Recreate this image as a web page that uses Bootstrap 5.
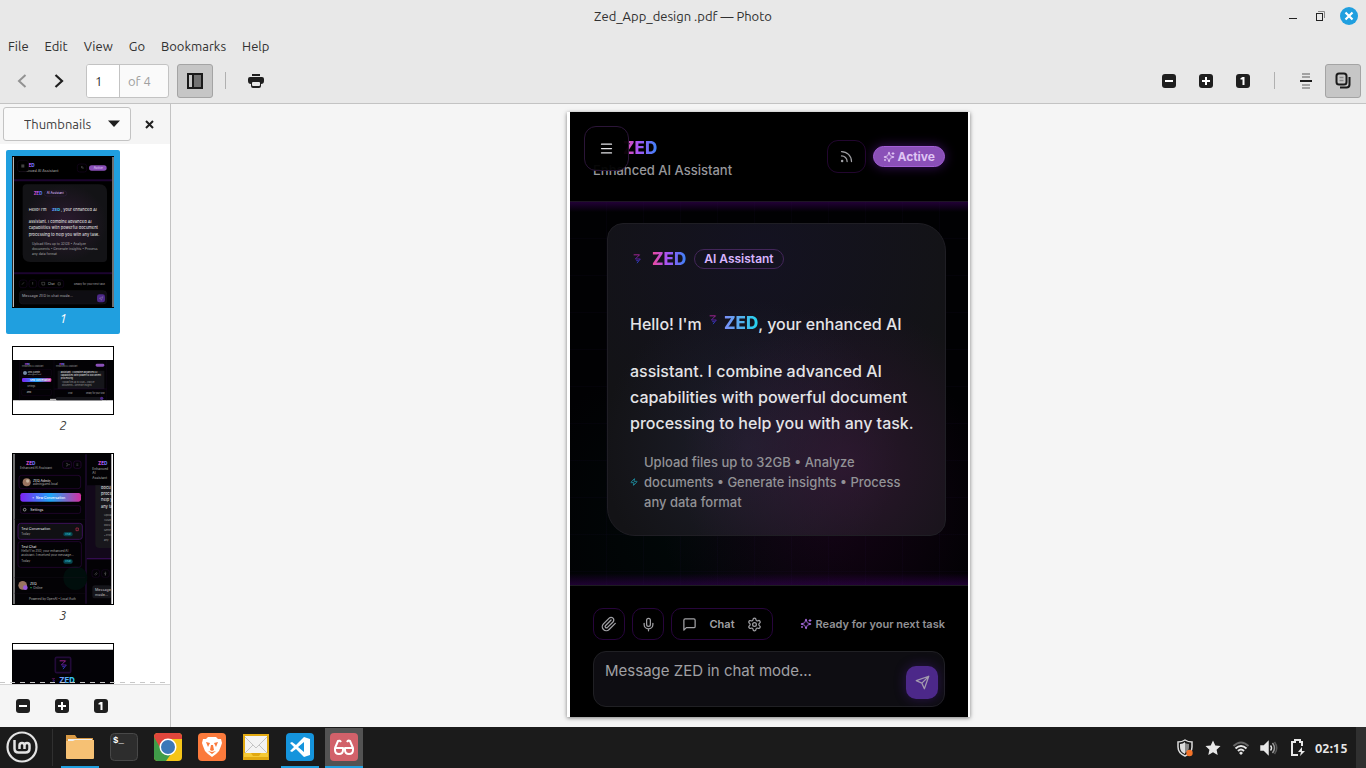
<!DOCTYPE html>
<html lang="en">
<head>
<meta charset="utf-8">
<meta name="viewport" content="width=device-width, initial-scale=1">
<title>Zed_App_design .pdf — Photo</title>
<link href="https://cdn.jsdelivr.net/npm/bootstrap@5.3.0/dist/css/bootstrap.min.css" rel="stylesheet">
<style>
  :root { --accent: #209fdf; --chrome: #e8e8e8; --edge: #c3c3c3; --ink: #303030; }
  body { font-family: Ubuntu, "Noto Sans", sans-serif; font-size: 13px; line-height: 20px; color: var(--ink); background: #f5f5f5; }
  button { font: inherit; color: inherit; padding: 0; border: 0; background: none; }
  svg { display: block; flex: none; }
  .line-art { fill: none; stroke: currentColor; stroke-width: 2; stroke-linecap: round; stroke-linejoin: round; }

  /* window frame */
  .titlebar { height: 32px; background: var(--chrome); }
  .window-buttons { gap: 15px; right: 8px; top: 7px; }
  .menubar { height: 28px; background: var(--chrome); padding: 0 8px; gap: 16px; }
  .menubar a { color: var(--ink); text-decoration: none; }
  .toolbar { height: 44px; background: var(--chrome); border-bottom: 1px solid var(--edge); padding: 0 5px 2px 4px; }
  .tool-row { gap: 1px; }
  .tool { width: 36px; height: 34px; display: flex; align-items: center; justify-content: center; border-radius: 3px; color: #1f1f1f; }
  .tool-on { background: #c6c6c6; border: 1px solid #a4a4a4; }
  .page-box { width: 83px; height: 34px; margin: 0 8px 0 9px; background: #fafafa; border: 1px solid var(--edge); border-radius: 3px; overflow: hidden; }
  .page-box input { width: 33px; border: 0; border-right: 1px solid var(--edge); padding: 0 0 0 8px; background: #fff; color: var(--ink); outline: 0; }
  .page-box label { padding-left: 8px; color: #a0a0a0; }
  .divider { width: 1px; height: 17px; background: #b0b0b0; margin: 0 12px; }

  /* thumbnails pane */
  .work { min-height: 0; }
  .side { width: 171px; flex: none; border-right: 1px solid var(--edge); background: #f5f5f5; }
  .side-head { height: 40px; padding: 3px; flex: none; }
  .picker { width: 128px; height: 34px; position: relative; }
  .picker select { appearance: none; width: 100%; height: 100%; padding: 0 0 0 20px; border: 1px solid var(--edge); border-radius: 3px; background: #fafafa; color: #404040; }
  .picker svg { position: absolute; right: 11px; top: 13px; pointer-events: none; }
  .thumbs { background: #fff; padding: 6px; overflow: hidden; min-height: 0; border-bottom: 1px solid #d4d4d4; position: relative; }
  .thumbs::after { content: ""; position: absolute; left: 0; right: 0; bottom: 1px; height: 1px; background: repeating-linear-gradient(90deg, #c8c8c8 0 5px, transparent 5px 10px); }
  .thumb { display: block; width: 114px; padding: 6px; margin-bottom: 6px; border-radius: 2px; text-align: center; font-style: italic; flex: none; color: #404040; text-decoration: none; }
  .thumb-on { background: var(--accent); color: #fff; }
  .thumb > svg { width: 102px; font-family: Inter, sans-serif; font-style: normal; font-weight: 500; }
  .side-foot { height: 42px; padding-left: 5px; gap: 3px; flex: none; }

  /* document page */
  .viewer { padding: 8px; }
  .sheet { width: 403px; padding: 0 2px 0 3px; background: #fff; box-shadow: 0 1px 4px rgba(0,0,0,.5); }
  .app { height: 605px; background: #000; color: #e4e4e7; font-family: Inter, sans-serif; font-weight: 500; }
  .app-head { height: 90px; padding: 25px 23px 0; border-bottom: 1px solid #1e1525; }
  .head-tools { gap: 7px; padding-top: 3px; }
  .brand { font-size: 17px; line-height: 22px; font-weight: 800; width: fit-content; background: linear-gradient(90deg, #ec4899, #a855f7 45%, #3b82f6); -webkit-background-clip: text; background-clip: text; color: transparent; }
  .brand-cool { background-image: linear-gradient(90deg, #7c8cf8, #55b0ee 50%, #22d3ee); }
  .brand-head { margin-left: 30px; }
  .tagline { font-size: 13px; line-height: 22px; color: #97979b; }
  .burger { position: absolute; left: 14px; top: 14px; width: 45px; height: 45px; border: 1px solid #2b1538; border-radius: 12px; background: rgba(0,0,0,.95); display: flex; align-items: center; justify-content: center; color: #e4e4e7; }
  .feed { width: 39px; height: 33px; border: 1px solid #22062f; border-radius: 11px; display: flex; align-items: center; justify-content: center; color: #a0a0a4; }
  .active-pill { height: 21px; padding: 0 9px; border: 1px solid #a35fd6; border-radius: 11px; background: #8a50b8; color: #dfc4f3; font-size: 12px; line-height: 12px; font-weight: 700; gap: 2px; box-shadow: 0 0 12px rgba(126,34,206,.45); }
  .app-body { background:
      linear-gradient(180deg, rgba(60,0,95,.55), transparent 10px),
      linear-gradient(0deg, rgba(60,0,95,.5), transparent 12px),
      repeating-linear-gradient(90deg, transparent 0 36px, rgba(60,30,120,.05) 36px 37px),
      repeating-linear-gradient(180deg, transparent 0 36px, rgba(60,30,120,.05) 36px 37px),
      radial-gradient(circle at 65% 80%, rgba(50,8,50,.4), transparent 42%),
      radial-gradient(circle at 30% 85%, rgba(0,50,40,.14), transparent 40%), #010103;
      padding: 21px 22px 0 37px; height: 383px; }
  .bubble { height: 313px; padding: 24px 22px; border: 1px solid #1f1e24; border-radius: 16px 28px 16px 28px; background:
      radial-gradient(circle at 70% 78%, rgba(62,25,62,.55), transparent 48%),
      radial-gradient(circle at 42% 72%, rgba(40,42,66,.5), transparent 50%),
      radial-gradient(circle at 45% 10%, rgba(20,18,36,.8), transparent 60%), #131316; }
  .role-pill { height: 20px; padding: 0 9px; border: 1px solid #43265a; border-radius: 10px; color: #d8b4fe; font-size: 12px; line-height: 18px; font-weight: 600; margin-left: 8px; }
  .hello { font-size: 16px; line-height: 26px; margin-top: 33px; }
  .hello-lead { height: 47px; margin-bottom: 8px; padding-top: 8px; white-space: nowrap; }
  .hello-lead .brand { line-height: 24px; }
  .hint { font-size: 13px; line-height: 20px; margin-top: 16px; color: #929296; gap: 6px; }
  .app-foot { padding: 22px 23px 0; border-top: 1px solid #1c1c20; }
  .chips { gap: 7px; }
  .chip { height: 32px; min-width: 32px; border: 1px solid #27053c; border-radius: 10px; color: #a0a0a4; display: flex; align-items: center; justify-content: center; font-size: 11px; font-weight: 600; }
  .chip-wide { width: 102px; gap: 12px; }
  .ready { font-size: 11px; font-weight: 600; color: #929296; gap: 3px; }
  .composer { height: 56px; margin-top: 11px; background: #0e0d12; border: 1px solid #202024; border-radius: 13px; padding: 7px 6px 7px 11px; }
  .composer textarea { resize: none; border: 0; padding: 0; background: transparent; color: #e4e4e7; font-size: 15px; line-height: 24px; outline: 0; min-width: 0; font-weight: 400; overflow: hidden; }
  .composer textarea::placeholder { color: #a0a0a4; opacity: 1; }
  .send { width: 32px; height: 33px; border-radius: 10px; background: #4c2889; color: #a39aaf; display: flex; align-items: center; justify-content: center; box-shadow: 0 0 12px rgba(76,29,149,.45); }

  /* panel */
  .panel { height: 41px; background: #1b1b1b; color: #e8e8e8; }
  .launch { width: 44px; height: 41px; display: flex; align-items: center; justify-content: center; padding: 0 0 1px; }
  .launch-run { background: linear-gradient(var(--accent), var(--accent)) center bottom / 38px 2px no-repeat; }
  .launch-now { background: linear-gradient(var(--accent), var(--accent)) center bottom / 38px 2px no-repeat, linear-gradient(#535353, #535353) center bottom / 38px 40px no-repeat; }
  .panel-sep { width: 1px; height: 37px; background: #303030; margin: 0 5px 0 8px; }
  .tray { gap: 8px; }
  .clock { font-weight: 600; min-width: 36px; }
  .desk { width: 10px; background: #303030; margin-left: 5px; }
</style>
</head>
<body class="d-flex flex-column vh-100 overflow-hidden">

<!-- shared symbols -->
<svg width="0" height="0" class="position-absolute" aria-hidden="true">
  <defs>
    <linearGradient id="gz" x1="0" x2="1"><stop stop-color="#ec4899"/><stop offset=".45" stop-color="#a855f7"/><stop offset="1" stop-color="#3b82f6"/></linearGradient>
    <linearGradient id="gc" x1="0" x2="1"><stop stop-color="#7c8cf8"/><stop offset="1" stop-color="#22d3ee"/></linearGradient>
    <linearGradient id="gb" x1="0" x2="1"><stop stop-color="#7e22f5"/><stop offset=".5" stop-color="#1ea7f5"/><stop offset="1" stop-color="#d42fa0"/></linearGradient>
    <linearGradient id="gm" x1="0" x2="0" y2="1"><stop stop-color="#c026a8"/><stop offset=".5" stop-color="#5b21b6"/><stop offset="1" stop-color="#1d4ed8"/></linearGradient>
    <radialGradient id="gr"><stop stop-color="#2c1a30"/><stop offset="1" stop-color="#131316"/></radialGradient>
    <symbol id="zoom-out" viewBox="0 0 14 14"><rect width="14" height="14" rx="3" fill="#1f1f1f"/><path d="M3 6h8v2H3z" fill="#fff"/></symbol>
    <symbol id="zoom-in" viewBox="0 0 14 14"><rect width="14" height="14" rx="3" fill="#1f1f1f"/><path d="M3 6h3V3h2v3h3v2H8v3H6V8H3z" fill="#fff"/></symbol>
    <symbol id="zoom-one" viewBox="0 0 14 14"><rect width="14" height="14" rx="3" fill="#1f1f1f"/><path d="M6.500 3H8.500v8h-2V5.500H4.500V4.200z" fill="#fff"/></symbol>
    <symbol id="zmark" viewBox="0 0 10 12"><path d="M1 1h7L3 6h6L5 11M4 8h3" fill="none" stroke="url(#gm)" stroke-width="1"/></symbol>
    <symbol id="sparkles" viewBox="0 0 24 24"><path d="M9.900 15.500a2 2 0 0 0-1.400-1.400l-6.100-1.600a.5.5 0 0 1 0-1l6.100-1.500a2 2 0 0 0 1.400-1.500l1.600-6.100a.5.5 0 0 1 1 0l1.500 6.100a2 2 0 0 0 1.500 1.500l6.100 1.500a.5.5 0 0 1 0 1l-6.100 1.600a2 2 0 0 0-1.500 1.400l-1.500 6.100a.5.5 0 0 1-1 0zM20 3v4M22 5h-4M4 17v2M5 18H3"/></symbol>
  </defs>
</svg>

<header>
  <div class="titlebar position-relative d-flex align-items-center justify-content-center">
    <span>Zed_App_design .pdf — Photo</span>
    <div class="window-buttons position-absolute d-flex align-items-center">
      <button aria-label="Minimize"><svg width="10" height="12"><path d="M1 8.500h8" stroke="#222" stroke-width="1"/></svg></button>
      <button aria-label="Restore"><svg width="12" height="12"><path d="M5 1.500h6.500V8" fill="none" stroke="#888"/><rect x="3.500" y="3.500" width="6" height="7" fill="none" stroke="#222"/></svg></button>
      <button aria-label="Close"><svg width="18" height="18"><circle cx="9" cy="9" r="9" fill="#209fdf"/><path d="M5.500 5.500l7 7m0-7l-7 7" stroke="#fff" stroke-width="2.200"/></svg></button>
    </div>
  </div>
  <nav class="menubar d-flex align-items-center">
    <a href="#">File</a><a href="#">Edit</a><a href="#">View</a><a href="#">Go</a><a href="#">Bookmarks</a><a href="#">Help</a>
  </nav>
  <div class="toolbar d-flex align-items-center">
    <div class="tool-row d-flex">
      <button class="tool" aria-label="Previous page"><svg width="10" height="14"><path d="M8.500 1L2 7l6.500 6" fill="none" stroke="#929292" stroke-width="2"/></svg></button>
      <button class="tool" aria-label="Next page"><svg width="10" height="14"><path d="M1.500 1L8 7l-6.500 6" fill="none" stroke="#1f1f1f" stroke-width="2.200"/></svg></button>
    </div>
    <div class="page-box d-flex align-items-stretch">
      <input id="page" type="text" value="1"><label for="page" class="align-self-center">of 4</label>
    </div>
    <button class="tool tool-on" aria-label="Side pane"><svg width="16" height="16"><path d="M1 1h14v14H1z" fill="#c6c6c6"/><path d="M6 1h9v14H6z" fill="#727272"/><path d="M1 1h14v14H1zM6 1v14" fill="none" stroke="#1a1a1a" stroke-width="2"/></svg></button>
    <span class="divider"></span>
    <button class="tool" aria-label="Print"><svg width="16" height="16" viewBox="0 0 16 16"><path d="M4 1h8v2H4zM2 4h12a2 2 0 0 1 2 2v2q0 3-3 3v2q0 2-2 2H5q-2 0-2-2v-2q-3 0-3-3V6a2 2 0 0 1 2-2z" fill="#1f1f1f"/><rect x="4" y="9" width="8" height="4" rx="1" fill="#e8e8e8"/></svg></button>
    <div class="tool-row d-flex align-items-center ms-auto">
      <button class="tool" aria-label="Zoom out"><svg width="14" height="14"><use href="#zoom-out"/></svg></button>
      <button class="tool" aria-label="Zoom in"><svg width="14" height="14"><use href="#zoom-in"/></svg></button>
      <button class="tool" aria-label="Normal size"><svg width="14" height="14"><use href="#zoom-one"/></svg></button>
      <span class="divider"></span>
      <button class="tool" aria-label="Continuous"><svg width="12" height="16"><path d="M2 1h8M2 4h8M2 12h8M2 15h8" stroke="#a2a2a2" stroke-width="2"/><path d="M0 8h12" stroke="#1a1a1a" stroke-width="2"/></svg></button>
      <button class="tool tool-on" aria-label="Dual page"><svg width="16" height="17" viewBox="0 0 16 17" fill="none"><rect x="1.500" y="1.500" width="10" height="11" rx="2.500" stroke="#1a1a1a" stroke-width="2"/><path d="M14.500 5v7.500q0 3-3 3H5" stroke="#1a1a1a" stroke-width="2"/><path d="M4.500 5.500h4M4.500 8.500h4" stroke="#8a8a8a" stroke-width="1.500"/></svg></button>
    </div>
  </div>
</header>

<main class="work d-flex flex-grow-1">
  <aside class="side d-flex flex-column">
    <div class="side-head d-flex align-items-center">
      <div class="picker">
        <select aria-label="Side pane content"><option>Thumbnails</option></select>
        <svg width="12" height="7"><path d="M0 .5h12L6 7z" fill="#1f1f1f"/></svg>
      </div>
      <button class="tool" aria-label="Close pane"><svg width="9" height="9"><path d="M1 1l7 7m0-7L1 8" stroke="#1f1f1f" stroke-width="2"/></svg></button>
    </div>
    <div class="thumbs flex-grow-1 d-flex flex-column">
      <a href="#" class="thumb thumb-on">
        <svg height="152" viewBox="0 0 306 456" role="img" aria-label="Page 1">
          <rect width="306" height="456" fill="#000"/><path d="M4 3v450M303 3v450" stroke="#ddd" stroke-width="3"/>
          <path d="M6 73h294" stroke="#1c0430" stroke-width="6"/><path d="M6 352h294" stroke="#1c0430" stroke-width="6"/>
          <text x="40" y="34" font-size="14" font-weight="800" fill="url(#gz)">ZED</text>
          <text x="22" y="49" font-size="11" fill="#999">Enhanced AI Assistant</text>
          <rect x="16" y="13" width="34" height="34" rx="9" fill="#000" stroke="#251030"/><path d="M28 27h9M28 30h9M28 33h9" stroke="#ddd"/>
          <rect x="196" y="24" width="28" height="24" rx="7" fill="none" stroke="#2c083d"/><path d="M207 31q7 0 7 7m-7-4q4 0 4 4" fill="none" stroke="#999"/>
          <rect x="231" y="28" width="53" height="16" rx="8" fill="#8a50b8"/><text x="245" y="39" font-size="9" fill="#dfc4f3">Active</text>
          <path d="M44 85h217q24 0 24 24v197q0 12-12 12H56q-24 0-24-24V97q0-12 12-12z" fill="url(#gr)"/>
          <text x="65" y="116" font-size="13" font-weight="800" fill="url(#gz)">ZED</text><rect x="97" y="105" width="67" height="15" rx="7" fill="none" stroke="#43265a"/><text x="104" y="115" font-size="9" fill="#d8b4fe">AI Assistant</text>
          <g font-size="12" fill="#ddd"><text x="50" y="165">Hello! I'm</text><text x="120" y="164" font-weight="800" fill="url(#gc)">ZED</text><text x="147" y="165">, your enhanced AI</text><text x="50" y="200">assistant. I combine advanced AI</text><text x="50" y="219">capabilities with powerful document</text><text x="50" y="239">processing to help you with any task.</text></g>
          <g font-size="10" fill="#929296"><text x="60" y="266">Upload files up to 32GB • Analyze</text><text x="60" y="281">documents • Generate insights • Process</text><text x="60" y="297">any data format</text></g>
          <path d="M6 356h294v97H6z" fill="#000"/>
          <g fill="none" stroke="#27053c"><rect x="22" y="372" width="23" height="23" rx="7"/><rect x="51" y="372" width="23" height="23" rx="7"/><rect x="80" y="372" width="75" height="23" rx="7"/></g>
          <g fill="none" stroke="#999"><path d="M30 386l6-7M62 378v8M89 379h9v8h-8zM138 380h7v7h-7z"/></g>
          <text x="108" y="387" font-size="9" fill="#999">Chat</text><text x="186" y="387" font-size="8" fill="#929296">Ready for your next task</text>
          <rect x="22" y="404" width="262" height="40" rx="10" fill="#0e0d12" stroke="#202024"/><text x="30" y="422" font-size="11" fill="#929296">Message ZED in chat mode...</text><rect x="255" y="415" width="24" height="24" rx="7" fill="#4c2889"/><path d="M262 427l11-5-5 11-2-5z" fill="none" stroke="#aaa"/>
        </svg>1</a>
      <a href="#" class="thumb">
        <svg height="69" viewBox="0 0 306 207" role="img" aria-label="Page 2">
          <rect x="1.500" y="1.500" width="303" height="204" fill="#fff" stroke="#000" stroke-width="3"/><path d="M3 42h300v121H3z" fill="#030205"/>
          <path d="M126 42v121M22 42v121M284 42v121" stroke="#1c0b28"/><path d="M114 160h78" stroke="#ddd" stroke-width="3"/>
          <text x="38" y="58" font-size="8" font-weight="800" fill="url(#gz)">ZED</text><text x="142" y="58" font-size="8" font-weight="800" fill="url(#gz)">ZED</text>
          <g font-size="6" fill="#888"><text x="30" y="64">Enhanced AI Assistant</text><text x="132" y="64">Enhanced AI Assistant</text></g>
          <rect x="251" y="53" width="26" height="9" rx="4" fill="#8a50b8"/>
          <rect x="28" y="70" width="90" height="22" rx="4" fill="none" stroke="#21082e"/><circle cx="39" cy="81" r="6" fill="#758ba5"/><text x="47" y="81" font-size="7" fill="#ccc">ZED Admin</text><text x="47" y="88" font-size="5" fill="#999">admin@zed.local</text>
          <rect x="30" y="96" width="88" height="12" rx="4" fill="url(#gb)"/><text x="54" y="105" font-size="7" fill="#fff">New Conversation</text><text x="46" y="124" font-size="6" fill="#999">Settings</text><rect x="29" y="130" width="89" height="18" rx="4" fill="none" stroke="#21082e"/><text x="44" y="141" font-size="7" fill="#ccc">ZED</text>
          <path d="M137 74h140v55H137z" fill="#15151a"/><g font-size="7" fill="#ddd"><text x="146" y="82">assistant. I combine advanced AI</text><text x="146" y="90">capabilities with powerful document</text><text x="146" y="98">processing</text></g><g font-size="6" fill="#888"><text x="150" y="112">Upload files up to 32GB • Analyze</text><text x="150" y="119">documents • Generate insights</text></g>
          <path d="M127 129h157" stroke="#350a4a"/><text x="168" y="145" font-size="6" fill="#999">Chat</text><text x="222" y="145" font-size="6" fill="#999">Ready for your task</text><rect x="132" y="153" width="140" height="10" rx="3" fill="#15151a"/><circle cx="269" cy="157" r="5" fill="#4c2889"/>
        </svg>2</a>
      <a href="#" class="thumb">
        <svg height="152" viewBox="0 0 306 456" role="img" aria-label="Page 3">
          <rect x="1.500" y="1.500" width="303" height="453" fill="#030205" stroke="#000" stroke-width="3"/><path d="M6 3v450" stroke="#ddd" stroke-width="3"/><path d="M222 4v448" stroke="#210d35" stroke-width="4"/>
          <path d="M224 97h74v220h-74z" fill="#12081a"/><path d="M250 97h48v188h-35q-13 0-13-13z" fill="#18171c"/><path d="M224 317h74" stroke="#330c50" stroke-width="4"/><circle cx="190" cy="375" r="36" fill="#000e0c"/>
          <text x="42" y="35" font-size="14" font-weight="800" fill="url(#gz)">ZED</text><text x="258" y="35" font-size="14" font-weight="800" fill="url(#gz)">ZED</text><text x="24" y="49" font-size="9" fill="#999">Enhanced AI Assistant</text>
          <g font-size="10" fill="#999"><text x="241" y="50">Enhanced</text><text x="241" y="63">AI</text><text x="241" y="77">Assistant</text></g>
          <g fill="none" stroke="#2c083d" stroke-width="2"><rect x="152" y="24" width="26" height="22" rx="6"/><rect x="185" y="24" width="22" height="22" rx="6"/><rect x="21" y="67" width="185" height="40" rx="8"/><rect x="25" y="158" width="181" height="23" rx="6"/><rect x="18" y="266" width="190" height="77" rx="8"/></g>
          <path d="M162 31h4v8h-4M168 35h6M193 33h6M193 37h6" fill="none" stroke="#999"/>
          <circle cx="44" cy="88" r="12" fill="#98745f"/><circle cx="47" cy="84" r="5" fill="#c5b29c"/><text x="63" y="86" font-size="10" fill="#ddd">ZED Admin</text><text x="63" y="97" font-size="9" fill="#999">admin@zed.local</text>
          <rect x="25" y="120" width="182" height="26" rx="7" fill="url(#gb)"/><text x="60" y="137" font-size="10" fill="#fff">+ &nbsp;New Conversation</text><circle cx="38" cy="170" r="4" fill="none" stroke="#ccc" stroke-width="2"/><text x="55" y="174" font-size="10" fill="#ddd">Settings</text>
          <path d="M6 199h214M6 374h214M6 421h214" stroke="#1a1320"/><rect x="18" y="211" width="193" height="48" rx="8" fill="#101014" stroke="#3c1159" stroke-width="3"/>
          <g font-size="10" fill="#ddd"><text x="28" y="230">Test Conversation</text><text x="28" y="284">Test Chat</text><text x="54" y="395">ZED</text></g><path d="M192 225h7v8h-7z" fill="none" stroke="#c03050" stroke-width="2"/>
          <g font-size="9" fill="#999"><text x="28" y="246">Today</text><text x="28" y="297">Hello! I'm ZED, your enhanced AI</text><text x="28" y="309">assistant. I received your message...</text><text x="28" y="328">Today</text><text x="64" y="407">Online</text><text x="51" y="441">Powered by OpenAI • Local Auth</text></g>
          <rect x="154" y="237" width="28" height="13" rx="6" fill="#064650"/><rect x="154" y="319" width="28" height="13" rx="6" fill="#064650"/><g font-size="8" fill="#39bfd0"><text x="160" y="246">chat</text><text x="160" y="328">chat</text></g>
          <circle cx="32" cy="397" r="13" fill="#98745f"/><circle cx="40" cy="404" r="7" fill="#9858d8"/><circle cx="57" cy="404" r="2" fill="#22c55e"/>
          <g font-size="12" fill="#ddd"><text x="267" y="107">docu</text><text x="267" y="126">proce</text><text x="267" y="145">help y</text><text x="267" y="164">any ta</text></g><g font-size="8" fill="#888"><text x="276" y="190">Uploa</text><text x="276" y="205">32GB</text><text x="276" y="220">docu</text><text x="276" y="235">Gene</text><text x="276" y="250">• Proc</text><text x="276" y="264">any</text></g>
          <g fill="none" stroke="#2c083d"><rect x="240" y="350" width="23" height="23" rx="7"/><rect x="269" y="350" width="23" height="23" rx="7"/></g><path d="M248 365l6-7M251 367l5-6M280 356v8M277 361q3 5 6 0M280 364v4" fill="none" stroke="#aaa"/>
          <rect x="241" y="397" width="57" height="39" rx="8" fill="#15151a"/><g font-size="11" fill="#aaa"><text x="249" y="415">Message</text><text x="249" y="430">mode...</text></g>
          <path d="M298 3h5v450h-5z" fill="#fff"/>
        </svg>3</a>
      <a href="#" class="thumb">
        <svg height="152" viewBox="0 0 306 456" role="img" aria-label="Page 4">
          <rect x="1.500" y="1.500" width="303" height="453" fill="#fff" stroke="#000" stroke-width="3"/><path d="M3 20h300v433H3z" fill="#030206"/>
          <rect x="130" y="43" width="46" height="46" rx="4" fill="#05030a" stroke="#220a38" stroke-width="5"/><svg x="140" y="51" width="26" height="30"><use href="#zmark"/></svg>
          <svg x="118" y="104" width="12" height="16"><use href="#zmark"/></svg><text x="142" y="121" font-size="23" font-weight="800" fill="url(#gc)">ZED</text>
        </svg></a>
    </div>
    <div class="side-foot d-flex align-items-center">
      <button class="tool" aria-label="Smaller thumbnails"><svg width="14" height="14"><use href="#zoom-out"/></svg></button>
      <button class="tool" aria-label="Larger thumbnails"><svg width="14" height="14"><use href="#zoom-in"/></svg></button>
      <button class="tool" aria-label="Default thumbnails"><svg width="14" height="14"><use href="#zoom-one"/></svg></button>
    </div>
  </aside>

  <section class="viewer flex-grow-1 d-flex justify-content-center align-items-start">
    <article class="sheet">
      <div class="app position-relative d-flex flex-column">
        <div class="app-head d-flex justify-content-between align-items-start">
          <div>
            <div class="brand brand-head">ZED</div>
            <div class="tagline">Enhanced AI Assistant</div>
          </div>
          <div class="head-tools d-flex align-items-center">
            <button class="feed" aria-label="Feed"><svg class="line-art" width="15" height="15" viewBox="0 0 24 24"><path d="M4 11a9 9 0 0 1 9 9M4 4a16 16 0 0 1 16 16"/><circle cx="5" cy="19" r="1"/></svg></button>
            <span class="active-pill d-flex align-items-center"><svg class="line-art" width="12" height="12"><use href="#sparkles"/></svg>Active</span>
          </div>
        </div>
        <button class="burger" aria-label="Menu"><svg class="line-art" width="15" height="15" viewBox="0 0 24 24"><path d="M4 5h16M4 12h16M4 19h16"/></svg></button>

        <div class="app-body">
          <div class="bubble">
            <div class="d-flex align-items-center">
              <svg width="14" height="10" class="me-2"><use href="#zmark"/></svg>
              <span class="brand">ZED</span><span class="role-pill">AI Assistant</span>
            </div>
            <div class="hello">
              <div class="hello-lead d-flex">Hello! I'm&nbsp;<svg width="14" height="10" class="mt-1 me-1"><use href="#zmark"/></svg><span class="brand brand-cool">ZED</span>, your enhanced AI</div>
              assistant. I combine advanced AI<br>capabilities with powerful document<br>processing to help you with any task.
            </div>
            <div class="hint d-flex align-items-center">
              <svg class="line-art" width="8" height="8" viewBox="0 0 24 24" style="color:#22b8cf"><path d="M4 14a1 1 0 0 1-.8-1.600l9.900-10.200a.5.5 0 0 1 .9.500L12 8.700A1 1 0 0 0 13 10h7a1 1 0 0 1 .8 1.600l-9.900 10.200a.5.5 0 0 1-.9-.5l2-6A1 1 0 0 0 11 14z"/></svg>
              <span>Upload files up to 32GB • Analyze<br>documents • Generate insights • Process<br>any data format</span>
            </div>
          </div>
        </div>

        <div class="app-foot flex-grow-1">
          <div class="chips d-flex align-items-center">
            <button class="chip" aria-label="Attach"><svg class="line-art" width="16" height="16" viewBox="0 0 24 24"><path d="M21.400 11.100l-9.200 9.200a6 6 0 0 1-8.500-8.500l8.600-8.600a4 4 0 1 1 5.700 5.700l-8.600 8.500a2 2 0 0 1-2.800-2.800l8.500-8.500"/></svg></button>
            <button class="chip" aria-label="Dictate"><svg class="line-art" width="15" height="15" viewBox="0 0 24 24"><rect x="9" y="2" width="6" height="13" rx="3"/><path d="M19 10v2a7 7 0 0 1-14 0v-2M12 19v3"/></svg></button>
            <button class="chip chip-wide"><svg class="line-art" width="15" height="15" viewBox="0 0 24 24"><path d="M21 15a2 2 0 0 1-2 2H7l-4 4V5a2 2 0 0 1 2-2h14a2 2 0 0 1 2 2z"/></svg>Chat<svg class="line-art" width="15" height="15" viewBox="0 0 24 24"><path d="M9.700 4.100a2.300 2.300 0 0 1 4.600 0 2.300 2.300 0 0 0 3.300 1.900 2.300 2.300 0 0 1 2.400 4 2.300 2.300 0 0 0 0 3.900 2.300 2.300 0 0 1-2.400 4 2.300 2.300 0 0 0-3.300 1.900 2.300 2.300 0 0 1-4.600 0 2.300 2.300 0 0 0-3.300-1.900 2.300 2.300 0 0 1-2.400-4 2.300 2.300 0 0 0 0-3.900 2.300 2.300 0 0 1 2.400-4 2.300 2.300 0 0 0 3.300-1.900"/><circle cx="12" cy="12" r="3"/></svg></button>
            <span class="ready d-flex align-items-center ms-auto"><svg class="line-art" width="12" height="12" style="color:#a86be0"><use href="#sparkles"/></svg>Ready for your next task</span>
          </div>
          <div class="composer d-flex align-items-end">
            <textarea class="flex-grow-1 h-100" aria-label="Message" placeholder="Message ZED in chat mode..."></textarea>
            <button class="send" aria-label="Send"><svg class="line-art" width="15" height="15" viewBox="0 0 24 24"><path d="M22 2L2 9l9 4 4 9zM22 2L11 13"/></svg></button>
          </div>
        </div>
      </div>
    </article>
  </section>
</main>

<footer class="panel d-flex align-items-stretch flex-shrink-0">
  <button class="launch" aria-label="Menu"><svg width="32" height="32" viewBox="0 0 32 32" fill="none" stroke="#e4e4e4" stroke-width="2.200"><circle cx="16" cy="16" r="14.500"/><path d="M8.500 9v8.500q0 4 4 4h7q4 0 4-4v-3q0-2.500-2.500-2.500t-2.500 2.500V18m0-3.500q0-2.500-2.500-2.500t-2.500 2.500V18" stroke-width="2.500"/></svg></button>
  <span class="panel-sep align-self-center"></span>
  <button class="launch launch-run" aria-label="Files"><svg width="28" height="26" viewBox="0 0 28 26"><path d="M0 1h9l2 3h16v6H0z" fill="#d99a45"/><path d="M2 5h24v4H2z" fill="#eee"/><path d="M0 7h7l2-1h19v18q0 1-1 1H1q-1 0-1-1z" fill="#f6c174"/></svg></button>
  <button class="launch" aria-label="Terminal"><svg width="28" height="28" viewBox="0 0 28 28"><rect x=".5" y=".5" width="27" height="27" rx="4" fill="#2d2d2d" stroke="#484848"/><text x="3" y="10" font-family="Liberation Mono, monospace" font-size="9" font-weight="700" fill="#fff">$_</text></svg></button>
  <button class="launch" aria-label="Chrome"><svg width="28" height="28" viewBox="0 0 28 28"><defs><clipPath id="rc"><rect width="28" height="28" rx="4"/></clipPath></defs><g clip-path="url(#rc)"><path d="M0 0h28v28H0z" fill="#f5c518"/><path d="M0 0h28v6H14L7 17 0 5z" fill="#e0463c"/><path d="M0 4l8 14 9 3-5 7H0z" fill="#3f9c48"/></g><circle cx="14" cy="14" r="8.500" fill="#fff"/><circle cx="14" cy="14" r="7" fill="#3b78b8"/></svg></button>
  <button class="launch" aria-label="Brave"><svg width="28" height="28" viewBox="0 0 28 28"><rect width="28" height="28" rx="4" fill="#fb7a3c"/><path d="M10 4h8l2 2h3l1 4-1 3-2 5-3 3-4 3-4-3-3-3-2-5-1-3 1-4h3z" fill="#fff"/><path d="M8 9l4 1-2 4zM20 9l-4 1 2 4zM13 12h2l1 5-2 1-2-1zM10 18l4 1 4-1-4 3z" fill="#fb7a3c"/></svg></button>
  <button class="launch" aria-label="Mail"><svg width="26" height="26" viewBox="0 0 26 26"><path d="M0 0h26v26H0z" fill="#e2a911"/><path d="M2 2h22v17H2z" fill="#f3f3f3"/><path d="M2 3l11 11L24 3M2 19l8-8m14 8l-8-8" fill="none" stroke="#c4c4c4"/><path d="M1 19h7l2 3h6l2-3h7v4H1z" fill="#f6ca36"/></svg></button>
  <button class="launch launch-run" aria-label="Code"><svg width="28" height="28" viewBox="0 0 28 28"><rect width="28" height="28" rx="4" fill="#1594dc"/><path d="M18 4l6 2v16l-6 2-8-8-4 3-2-1 4-4-4-4 2-1 4 3zM18 9l-6 5 6 5z" fill="#fff" fill-rule="evenodd"/></svg></button>
  <button class="launch launch-now" aria-label="Document viewer"><svg width="28" height="28" viewBox="0 0 28 28"><rect width="28" height="28" rx="4" fill="#d2616a"/><path d="M5 15l3-7q2-1 3 1m12 6l-3-7q-2-1-3 1M5 15h8v2q0 4-4 4t-4-4zM15 15h8v2q0 4-4 4t-4-4zM13 16h2" fill="none" stroke="#fff" stroke-width="2" stroke-linejoin="round"/></svg></button>

  <div class="tray d-flex align-items-center ms-auto">
    <svg width="20" height="20" viewBox="0 0 20 20"><path d="M10 2q3 2 7 2v5q0 6-7 9-7-3-7-9V4q4 0 7-2z" fill="#1b1b1b" stroke="#ddd" stroke-width="1.500"/><path d="M10 5q2 1 4 1v3q0 4-4 6z" fill="#888"/><path d="M10 4v12q-5-2-5-7V6q3 0 5-2z" fill="#ddd"/><circle cx="14.500" cy="15" r="3.200" fill="#f37329"/></svg>
    <svg width="20" height="20" viewBox="0 0 20 20"><path d="M10 2.500l2.300 5 5.200.6-3.900 3.600 1.100 5.300L10 14.300 5.300 17l1.100-5.300-3.900-3.600 5.200-.6z" fill="#e8e8e8"/></svg>
    <svg width="20" height="20" viewBox="0 0 20 20" fill="none" stroke-width="2"><path d="M2.500 8q7.500-7 15 0" stroke="#666"/><path d="M4.500 10.500q5.500-5 11 0M7 13q3-3 6 0" stroke="#e8e8e8"/><path d="M8 15l2-1.500 2 1.500-2 2z" fill="#e8e8e8"/></svg>
    <svg width="20" height="20" viewBox="0 0 20 20" fill="none" stroke="#e8e8e8" stroke-width="1.500"><path d="M2 8h3l4-4v12l-4-4H2z" fill="#e8e8e8"/><path d="M11.500 7.500q2 2.500 0 5"/><path d="M13.500 5q4 5 0 10" stroke="#999"/><path d="M15.500 4q4.500 6 0 12" stroke="#555"/></svg>
    <svg width="20" height="20" viewBox="0 0 20 20"><path d="M15 8V4h-2V2H8v2H5v13h6" fill="none" stroke="#e8e8e8" stroke-width="2"/><path d="M15 9l-4 5h3l-1 4 5-5h-3z" fill="#e8e8e8"/></svg>
    <time class="clock">02:15</time>
  </div>
  <span class="desk"></span>
</footer>
<script src="https://cdn.jsdelivr.net/npm/bootstrap@5.3.0/dist/js/bootstrap.bundle.min.js"></script>
</body>
</html>
